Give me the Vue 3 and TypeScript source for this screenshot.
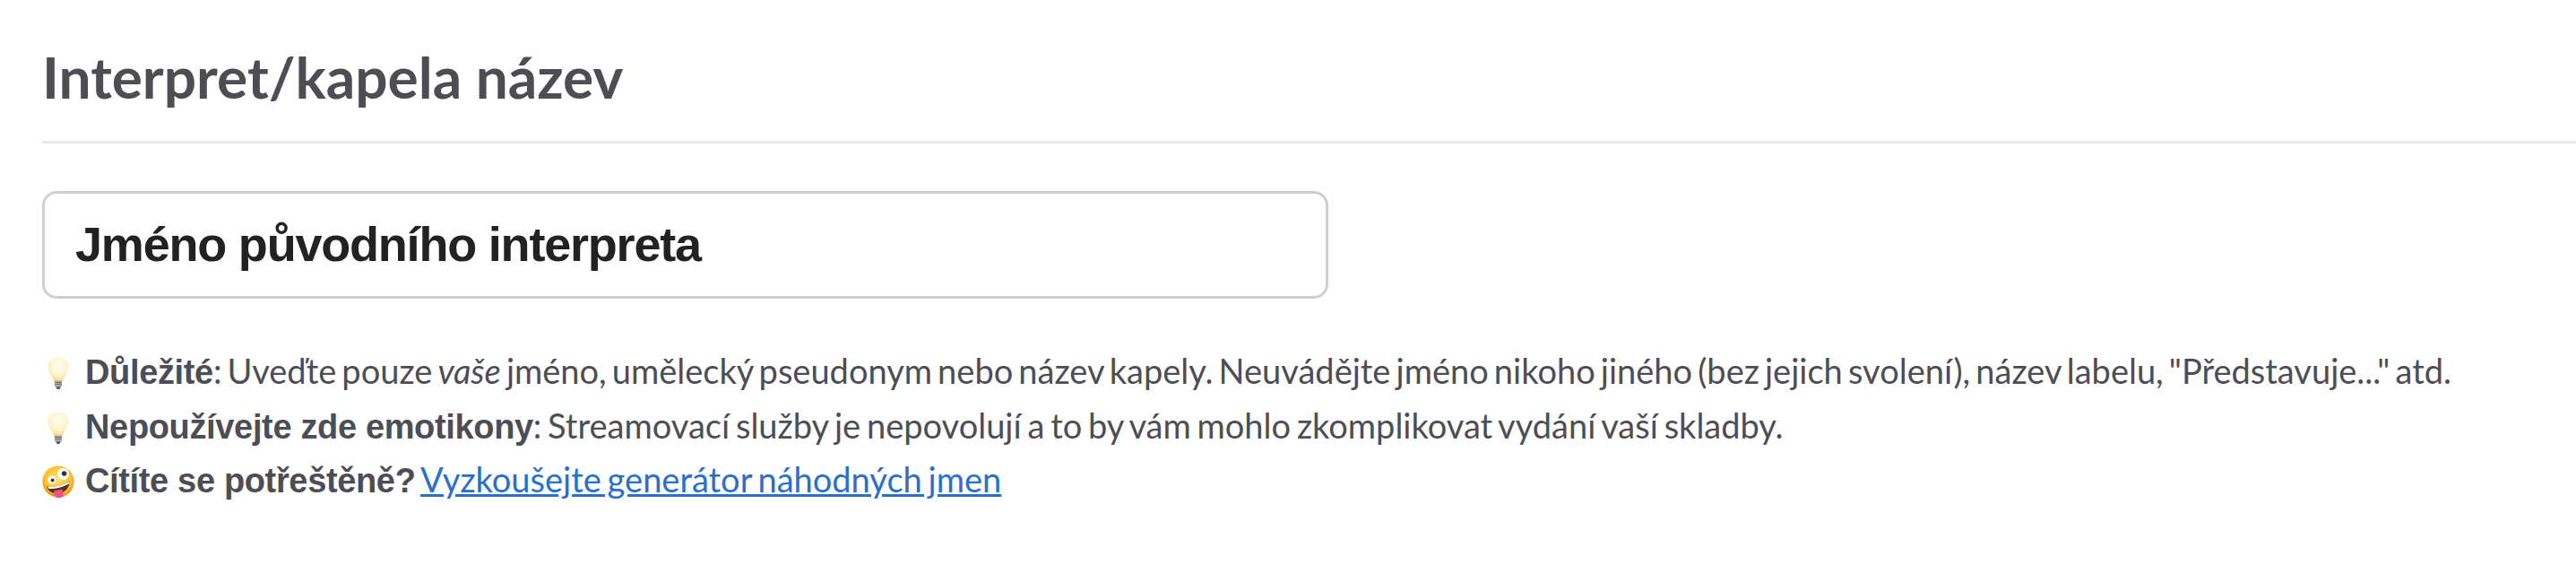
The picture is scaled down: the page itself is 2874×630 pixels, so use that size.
<script setup lang="ts">
const name = 'Jméno původního interpreta'
</script>

<template>
  <main class="page">
    <h1 class="title">Interpret/kapela název</h1>
    <input class="field" type="text" :value="name" aria-label="Interpret/kapela název" />
    <ul class="tips">
      <li class="long">
        <svg class="emoji" viewBox="0 0 36 36" aria-hidden="true">
          <defs>
            <radialGradient id="bulb1" cx="50%" cy="35%" r="62%">
              <stop offset="0%" stop-color="#fffdf0" />
              <stop offset="65%" stop-color="#fff6cf" />
              <stop offset="100%" stop-color="#f8dc8e" />
            </radialGradient>
          </defs>
          <path d="M18 0C11.4 0 6.6 5 6.6 11c0 5.6 4.4 9.2 6.6 16.2h9.6C25 20.2 29.4 16.6 29.4 11 29.4 5 24.6 0 18 0Z" fill="url(#bulb1)" />
          <path d="M13.8 26.5h8.4l-.4 6.2-2 2.3h-3.6l-2-2.3Z" fill="#a9a9a6" />
          <path d="M14 28.5h8M14.2 30.6h7.6" stroke="#74746f" stroke-width="1" />
          <path d="M15.6 33.6h4.8L19.2 36h-2.4Z" fill="#4b4b4b" />
        </svg>
        <b>Důležité</b>: Uveďte pouze <em>vaše</em> jméno, umělecký pseudonym nebo název kapely. Neuvádějte jméno nikoho jiného (bez jejich svolení), název labelu, "Představuje..." atd.
      </li>
      <li>
        <svg class="emoji" viewBox="0 0 36 36" aria-hidden="true">
          <path d="M18 0C11.4 0 6.6 5 6.6 11c0 5.6 4.4 9.2 6.6 16.2h9.6C25 20.2 29.4 16.6 29.4 11 29.4 5 24.6 0 18 0Z" fill="url(#bulb1)" />
          <path d="M13.8 26.5h8.4l-.4 6.2-2 2.3h-3.6l-2-2.3Z" fill="#a9a9a6" />
          <path d="M14 28.5h8M14.2 30.6h7.6" stroke="#74746f" stroke-width="1" />
          <path d="M15.6 33.6h4.8L19.2 36h-2.4Z" fill="#4b4b4b" />
        </svg>
        <b>Nepoužívejte zde emotikony</b>: Streamovací služby je nepovolují a to by vám mohlo zkomplikovat vydání vaší skladby.
      </li>
      <li>
        <svg class="emoji" viewBox="0 0 36 36" aria-hidden="true">
          <defs>
            <radialGradient id="face" cx="50%" cy="42%" r="58%">
              <stop offset="0%" stop-color="#ffe26a" />
              <stop offset="70%" stop-color="#fbc22f" />
              <stop offset="100%" stop-color="#ee8a1c" />
            </radialGradient>
          </defs>
          <circle cx="18" cy="18" r="17.6" fill="url(#face)" />
          <circle cx="11" cy="16" r="4.6" fill="#fff" />
          <circle cx="11.6" cy="16.4" r="2" fill="#3a3230" />
          <circle cx="23.6" cy="9.4" r="6.6" fill="#fff" />
          <circle cx="24.6" cy="9" r="2.8" fill="#3a3230" />
          <path d="M5 23.6c8 1.6 18-1.4 26-6.6-.6 8-5.8 13.6-12.6 14.4C12 32 6.8 29 5 23.6Z" fill="#5a2f22" />
          <path d="M6 23.9c8 1 17-1.7 24.6-6.3l-.2 2.7C22.8 24.6 14 26.6 7.4 26Z" fill="#fff" />
          <path d="M13.2 28.2l9.4-1.4 1 5.6c.4 2.4-1.2 3.4-4.6 3.6-3.6.2-5-.8-5.3-3.2Z" fill="#ee4f8b" />
        </svg>
        <b>Cítíte se potřeštěně?</b> <a href="#">Vyzkoušejte generátor náhodných jmen</a>
      </li>
    </ul>
  </main>
</template>

<style scoped>
.page {
  box-sizing: border-box;
  width: 2874px;
  height: 630px;
  padding-left: 47px;
  background: #fff;
  color: #4d4e54;
  font-family: Lato, "Liberation Sans", sans-serif;
}
.title {
  margin: 0;
  padding: 47px 0 0;
  height: 160px;
  box-sizing: border-box;
  border-bottom: 3px solid #e8e8ec;
  font-size: 64px;
  line-height: 78px;
  font-weight: 700;
}
.field {
  display: block;
  box-sizing: border-box;
  width: 1435px;
  height: 120px;
  margin-top: 53px;
  padding: 0 34px 2px;
  border: 3px solid #cfcfcf;
  border-radius: 16px;
  background: #fff;
  color: #222;
  font-family: "Liberation Sans", Arial, sans-serif;
  font-size: 54px;
  font-weight: 700;
  letter-spacing: -1.2px;
  outline: none;
}
.tips {
  list-style: none;
  margin: 50px 0 0;
  padding: 0;
  font-size: 38px;
  line-height: 60.5px;
  word-spacing: -2.9px;
}
.tips li {
  height: 60.5px;
}
.tips .long {
  word-spacing: -3.6px;
}
.tips b {
  font-family: "Liberation Sans", Arial, sans-serif;
  font-weight: 700;
  letter-spacing: -0.35px;
  word-spacing: 0;
  line-height: 1;
}
.tips a {
  color: #2a6fc9;
  text-decoration: underline;
}
.emoji {
  display: inline-block;
  width: 36px;
  height: 36px;
  margin-right: 12px;
  vertical-align: -6px;
}
</style>
